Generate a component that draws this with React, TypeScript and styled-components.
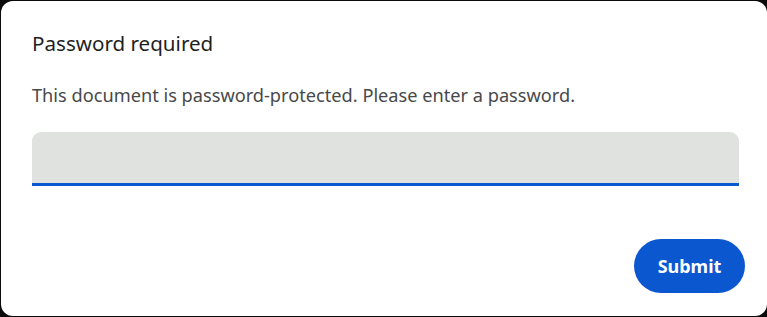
import * as React from 'react';
import styled, { createGlobalStyle } from 'styled-components';

const GlobalStyle = createGlobalStyle`
  html, body {
    margin: 0;
    padding: 0;
    background: #0b0b0b;
    overflow: hidden;
  }
`;

const Backdrop = styled.div`
  padding: 1px 0 0 1px;
  width: 767px;
  height: 317px;
  box-sizing: border-box;
`;

const Dialog = styled.div`
  width: 766px;
  height: 315px;
  box-sizing: border-box;
  background: #ffffff;
  border-radius: 12px;
  padding: 28px 28px 0 31px;
  display: flex;
  flex-direction: column;
  font-family: 'Noto Sans', 'Open Sans', sans-serif;
`;

const Title = styled.h2`
  margin: 0;
  font-size: 20.6px;
  line-height: 28px;
  font-weight: 400;
  color: #1f1f1f;
`;

const Message = styled.p`
  margin: 26px 0 0;
  font-size: 18.2px;
  line-height: 24px;
  color: #48494a;
`;

const Field = styled.input`
  margin-top: 25px;
  height: 54px;
  width: 707px;
  box-sizing: border-box;
  border: none;
  border-bottom: 3px solid #0b57d0;
  border-radius: 9px 9px 0 0;
  background: #e0e2df;
  padding: 0 16px;
  font-family: inherit;
  font-size: 16px;
  color: #1f1f1f;
  outline: none;
`;

const Actions = styled.div`
  display: flex;
  justify-content: flex-end;
  margin-top: 53px;
  margin-right: -6px;
`;

const Button = styled.button`
  height: 54px;
  width: 111px;
  border: none;
  border-radius: 27px;
  background: #0b57d0;
  color: #ffffff;
  font-family: inherit;
  font-size: 18px;
  font-weight: 700;
  cursor: pointer;
`;

export default function App(): React.ReactElement {
  return (
    <>
      <GlobalStyle />
      <Backdrop>
        <Dialog>
          <Title>Password required</Title>
          <Message>This document is password-protected. Please enter a password.</Message>
          <Field type="password" />
          <Actions>
            <Button type="button">Submit</Button>
          </Actions>
        </Dialog>
      </Backdrop>
    </>
  );
}
